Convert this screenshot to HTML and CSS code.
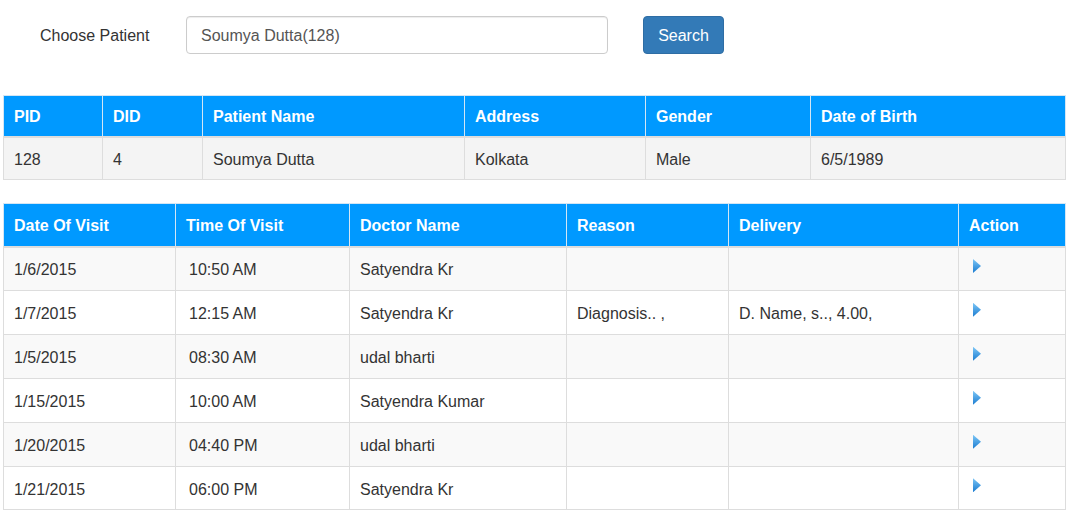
FILE: index.html
```html
<!DOCTYPE html>
<html>
<head>
<meta charset="utf-8">
<link rel="stylesheet" href="styles.css">
</head>
<body>
<div class="page">
  <div class="search-bar">
    <label class="search-label">Choose Patient</label>
    <input class="search-input" type="text" value="Soumya Dutta(128)">
    <button class="search-btn">Search</button>
  </div>

  <table class="grid patient">
    <thead>
      <tr>
        <th class="c-pid">PID</th>
        <th class="c-did">DID</th>
        <th class="c-name">Patient Name</th>
        <th class="c-addr">Address</th>
        <th class="c-gender">Gender</th>
        <th class="c-dob">Date of Birth</th>
      </tr>
    </thead>
    <tbody>
      <tr>
        <td>128</td>
        <td>4</td>
        <td>Soumya Dutta</td>
        <td>Kolkata</td>
        <td>Male</td>
        <td>6/5/1989</td>
      </tr>
    </tbody>
  </table>

  <table class="grid visits">
    <thead>
      <tr>
        <th class="c-date">Date Of Visit</th>
        <th class="c-time">Time Of Visit</th>
        <th class="c-doc">Doctor Name</th>
        <th class="c-reason">Reason</th>
        <th class="c-deliv">Delivery</th>
        <th class="c-action">Action</th>
      </tr>
    </thead>
    <tbody>
      <tr><td>1/6/2015</td><td class="time">10:50 AM</td><td>Satyendra Kr</td><td></td><td></td><td><span class="play"></span></td></tr>
      <tr><td>1/7/2015</td><td class="time">12:15 AM</td><td>Satyendra Kr</td><td>Diagnosis.. ,</td><td>D. Name, s.., 4.00,</td><td><span class="play"></span></td></tr>
      <tr><td>1/5/2015</td><td class="time">08:30 AM</td><td>udal bharti</td><td></td><td></td><td><span class="play"></span></td></tr>
      <tr><td>1/15/2015</td><td class="time">10:00 AM</td><td>Satyendra Kumar</td><td></td><td></td><td><span class="play"></span></td></tr>
      <tr><td>1/20/2015</td><td class="time">04:40 PM</td><td>udal bharti</td><td></td><td></td><td><span class="play"></span></td></tr>
      <tr><td>1/21/2015</td><td class="time">06:00 PM</td><td>Satyendra Kr</td><td></td><td></td><td><span class="play"></span></td></tr>
    </tbody>
  </table>
</div>
</body>
</html>
```

FILE: styles.css
```css
* { box-sizing: border-box; }
html, body { margin: 0; padding: 0; background: #fff; }
body {
  font-family: "Liberation Sans", Arial, sans-serif;
  font-size: 16px;
  color: #333;
}
.page { padding: 16px 6px 0 3px; }

.search-bar {
  display: flex;
  align-items: center;
  height: 38px;
}
.search-label {
  width: 183px;
  padding-left: 37px;
  padding-top: 2px;
  color: #333;
}
.search-input {
  width: 422px;
  height: 38px;
  border: 1px solid #ccc;
  border-radius: 4px;
  padding: 2px 14px 0;
  font-family: inherit;
  font-size: 16px;
  color: #555;
  box-shadow: inset 0 1px 1px rgba(0,0,0,.075);
}
.search-btn {
  margin-left: 35px;
  width: 81px;
  height: 38px;
  border: 1px solid #2e6da4;
  border-radius: 4px;
  background: #337ab7;
  color: #fff;
  font-family: inherit;
  font-size: 16px;
  padding: 2px 0 0;
}

.grid {
  width: 1062px;
  border-collapse: collapse;
  table-layout: fixed;
}
.grid th, .grid td {
  border: 1px solid #ddd;
  text-align: left;
  padding: 3px 10px 0;
  vertical-align: middle;
  white-space: nowrap;
}
.grid th {
  background: #0099ff;
  color: #fff;
  font-weight: bold;
  border-color: #d3e6f5;
  border-bottom: 2px solid #ddd;
}
.patient { margin-top: 41px; }
.patient thead tr { height: 41px; }
.patient tbody tr { height: 43px; }
.patient tbody td { background: #f4f4f4; }

.c-pid { width: 99px; }
.c-did { width: 100px; }
.c-name { width: 262px; }
.c-addr { width: 181px; }
.c-gender { width: 165px; }
.c-dob { width: 255px; }

.visits { margin-top: 23px; }
.visits thead tr { height: 43px; }
.visits tbody tr { height: 44px; }
.visits tbody tr:last-child { height: 43px; }
.visits tbody tr:nth-child(odd) td { background: #f9f9f9; }
.visits td.time { padding-left: 13px; }

.c-date { width: 172px; }
.c-time { width: 174px; }
.c-doc { width: 217px; }
.c-reason { width: 162px; }
.c-deliv { width: 230px; }
.c-action { width: 107px; }

.play {
  display: inline-block;
  width: 8px;
  height: 14px;
  margin-left: 4px;
  margin-top: -10px;
  vertical-align: middle;
  background: linear-gradient(to bottom, #7cc6f6, #1a7bd0);
  clip-path: polygon(0 0, 100% 50%, 0 100%);
}
```
